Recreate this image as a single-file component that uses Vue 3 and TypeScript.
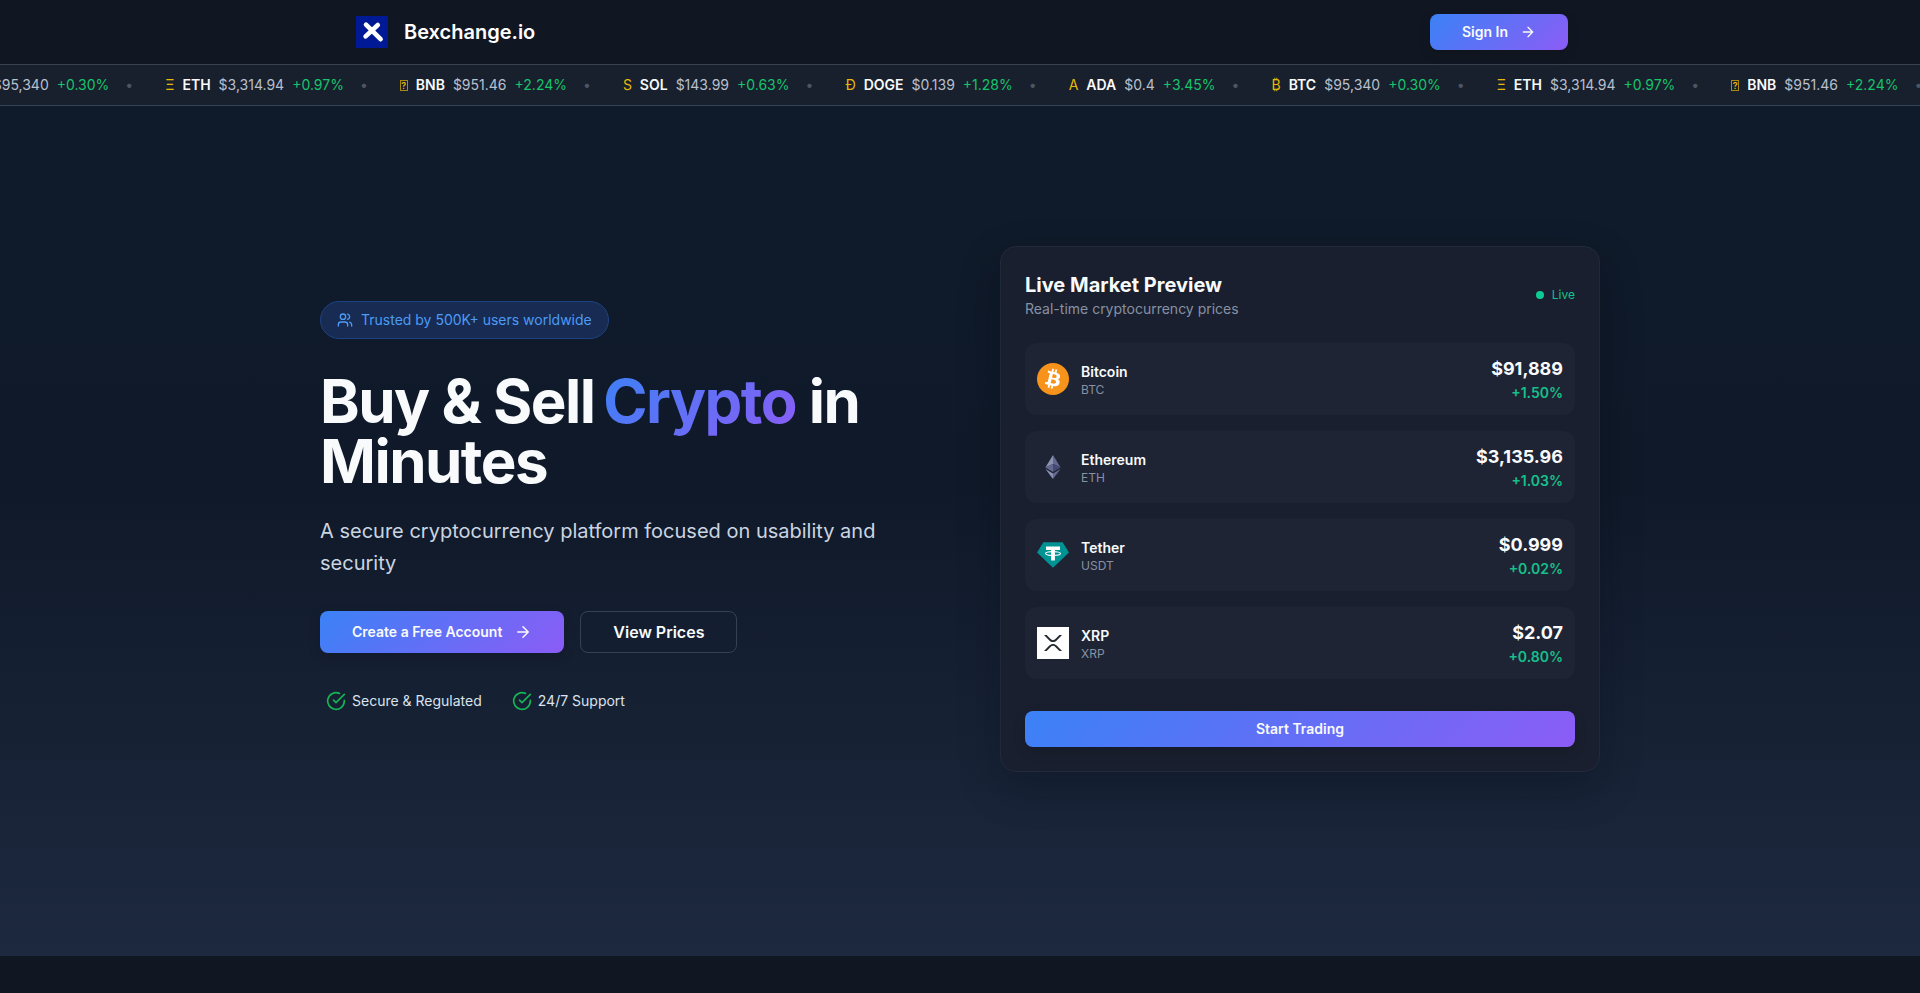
<script setup lang="ts">
interface Tick {
  icon: string
  symbol: string
  price: string
  change: string
}

interface Coin {
  id: 'btc' | 'eth' | 'usdt' | 'xrp'
  name: string
  symbol: string
  price: string
  change: string
}

const ticks: Tick[] = [
  { icon: '₿', symbol: 'BTC', price: '$95,340', change: '+0.30%' },
  { icon: 'Ξ', symbol: 'ETH', price: '$3,314.94', change: '+0.97%' },
  { icon: '', symbol: 'BNB', price: '$951.46', change: '+2.24%' },
  { icon: 'S', symbol: 'SOL', price: '$143.99', change: '+0.63%' },
  { icon: 'Ð', symbol: 'DOGE', price: '$0.139', change: '+1.28%' },
  { icon: 'A', symbol: 'ADA', price: '$0.4', change: '+3.45%' },
]

const tape: Tick[] = [...ticks, ...ticks.slice(0, 3)]

const coins: Coin[] = [
  { id: 'btc', name: 'Bitcoin', symbol: 'BTC', price: '$91,889', change: '+1.50%' },
  { id: 'eth', name: 'Ethereum', symbol: 'ETH', price: '$3,135.96', change: '+1.03%' },
  { id: 'usdt', name: 'Tether', symbol: 'USDT', price: '$0.999', change: '+0.02%' },
  { id: 'xrp', name: 'XRP', symbol: 'XRP', price: '$2.07', change: '+0.80%' },
]

const features: string[] = ['Secure & Regulated', '24/7 Support']
</script>

<template>
  <div class="page">
    <header class="header">
      <div class="header-inner">
        <a class="brand" href="#">
          <svg class="logo" viewBox="0 0 32 32" aria-hidden="true">
            <rect width="32" height="32" fill="#001a96" />
            <path d="M10 8.6 24.6 23.2M21.8 9 9.6 20.4" fill="none" stroke="#fff" stroke-width="4.6" stroke-linecap="round" />
          </svg>
          <span>Bexchange.io</span>
        </a>
        <button class="btn primary" type="button">
          Sign In
          <svg class="icon-sm line" viewBox="0 0 24 24" aria-hidden="true"><path d="M5 12h14M12 5l7 7-7 7" /></svg>
        </button>
      </div>
    </header>

    <div class="ticker">
      <ul class="tape">
        <li v-for="(t, i) in tape" :key="i" class="tick">
          <span v-if="t.icon" class="tick-icon">{{ t.icon }}</span>
          <span v-else class="tick-icon missing">?</span>
          <span class="tick-symbol">{{ t.symbol }}</span>
          <span class="tick-price">{{ t.price }}</span>
          <span class="tick-change">{{ t.change }}</span>
          <span class="tick-dot">•</span>
        </li>
      </ul>
    </div>

    <main class="hero">
      <div class="hero-inner">
        <section class="intro">
          <p class="badge">
            <svg class="icon-sm line" viewBox="0 0 24 24" aria-hidden="true">
              <path d="M16 21v-2a4 4 0 0 0-4-4H6a4 4 0 0 0-4 4v2" />
              <circle cx="9" cy="7" r="4" />
              <path d="M22 21v-2a4 4 0 0 0-3-3.87M16 3.13a4 4 0 0 1 0 7.75" />
            </svg>
            Trusted by 500K+ users worldwide
          </p>
          <h1>Buy &amp; Sell <span class="accent">Crypto</span> in Minutes</h1>
          <p class="lead">A secure cryptocurrency platform focused on usability and security</p>
          <div class="actions">
            <button class="btn primary large" type="button">
              Create a Free Account
              <svg class="icon-md line" viewBox="0 0 24 24" aria-hidden="true"><path d="M5 12h14M12 5l7 7-7 7" /></svg>
            </button>
            <button class="btn outline large" type="button">View Prices</button>
          </div>
          <ul class="features">
            <li v-for="f in features" :key="f">
              <svg class="icon-lg line" viewBox="0 0 24 24" aria-hidden="true">
                <path d="M22 11.08V12a10 10 0 1 1-5.93-9.14" />
                <path d="m9 11 3 3L22 4" />
              </svg>
              {{ f }}
            </li>
          </ul>
        </section>

        <section class="card">
          <div class="card-head">
            <div>
              <h2>Live Market Preview</h2>
              <p>Real-time cryptocurrency prices</p>
            </div>
            <span class="live">Live</span>
          </div>
          <ul class="coins">
            <li v-for="c in coins" :key="c.id" class="coin">
              <svg v-if="c.id === 'btc'" class="coin-icon" viewBox="0 0 64 64" aria-hidden="true">
                <circle cx="32" cy="32" r="32" fill="#f7931a" />
                <path fill="#fff" d="M46.1 27.44c.64-4.26-2.6-6.55-7.04-8.08l1.44-5.77-3.51-.87-1.4 5.61c-.92-.23-1.87-.45-2.81-.66l1.41-5.65-3.51-.88-1.44 5.77c-.76-.17-1.51-.35-2.24-.53l-4.84-1.22-.94 3.76s2.61.6 2.55.63c1.42.36 1.68 1.3 1.64 2.04l-3.94 15.8c-.17.44-.62 1.08-1.61.84.04.05-2.55-.64-2.55-.64l-1.75 4.03 4.57 1.14c.85.21 1.68.44 2.5.65l-1.45 5.83 3.5.88 1.44-5.77c.96.26 1.89.5 2.8.73l-1.44 5.74 3.52.88 1.45-5.82c5.99 1.13 10.49.68 12.38-4.74 1.53-4.36-.07-6.88-3.22-8.52 2.29-.53 4.02-2.04 4.49-5.15zm-8.02 11.25c-1.09 4.36-8.43 2-10.81 1.41l1.93-7.73c2.38.59 10.01 1.77 8.88 6.32zm1.09-11.31c-.99 3.97-7.1 1.95-9.08 1.46l1.75-7.01c1.98.49 8.36 1.41 7.33 5.55z" />
              </svg>
              <svg v-else-if="c.id === 'eth'" class="coin-icon" viewBox="0 0 32 32" aria-hidden="true">
                <path d="M16 4 8.4 16.4 16 13z" fill="#8a92b2" />
                <path d="M16 4v9l7.6 3.4z" fill="#62688f" />
                <path d="M8.4 16.4 16 13v7.9z" fill="#62688f" />
                <path d="M16 13v7.9l7.6-4.5z" fill="#454a75" />
                <path d="m8.4 17.9 7.6 4.5V28z" fill="#8a92b2" />
                <path d="M23.6 17.9 16 22.4V28z" fill="#62688f" />
              </svg>
              <svg v-else-if="c.id === 'usdt'" class="coin-icon" viewBox="0 0 32 32" aria-hidden="true">
                <path d="M6.4 3.2h19.2L32 13.6 16 28.8 0 13.6z" fill="#009393" />
                <path d="M9 7.6h14v3.3H9zM14.1 10.9h3.8v10.6h-3.8z" fill="#fff" />
                <ellipse cx="16" cy="14.6" rx="7.5" ry="1.9" fill="none" stroke="#fff" stroke-width="1.2" />
              </svg>
              <svg v-else class="coin-icon" viewBox="0 0 32 32" aria-hidden="true">
                <rect width="32" height="32" fill="#fff" />
                <path d="M7 8h2.6l4 4.1c1.4 1.4 3.4 1.4 4.8 0l4-4.1H25l-5.3 5.4c-2.1 2.1-5.3 2.1-7.4 0zM7 24h2.6l4-4.1c1.4-1.4 3.4-1.4 4.8 0l4 4.1H25l-5.3-5.4c-2.1-2.1-5.3-2.1-7.4 0z" fill="#23292f" />
              </svg>
              <div class="coin-name">
                <strong>{{ c.name }}</strong>
                <span>{{ c.symbol }}</span>
              </div>
              <div class="coin-price">
                <strong>{{ c.price }}</strong>
                <span>{{ c.change }}</span>
              </div>
            </li>
          </ul>
          <button class="btn primary wide" type="button">Start Trading</button>
        </section>
      </div>
    </main>
  </div>
</template>

<style>
body {
  margin: 0;
  background: #111722;
}
</style>

<style scoped>
.page {
  min-height: 100vh;
  background: #111722;
  color: #f8fafc;
  font-family: Inter, "Liberation Sans", sans-serif;
  font-size: 14px;
  line-height: 20px;
  overflow: hidden;
}
h1, h2, p, ul {
  margin: 0;
  padding: 0;
}
ul {
  list-style: none;
}
.line {
  fill: none;
  stroke: currentColor;
  stroke-width: 2;
  stroke-linecap: round;
  stroke-linejoin: round;
}
.icon-sm { width: 16px; height: 16px; }
.icon-md { width: 18px; height: 18px; }
.icon-lg { width: 20px; height: 20px; }

.header {
  background: #111722;
}
.header-inner {
  max-width: 1216px;
  margin: 0 auto;
  height: 64px;
  display: flex;
  align-items: center;
  justify-content: space-between;
}
.brand {
  display: flex;
  align-items: center;
  gap: 16px;
  padding-left: 4px;
  color: #fff;
  font-size: 20px;
  font-weight: 600;
  line-height: 28px;
  text-decoration: none;
}
.logo { width: 32px; height: 32px; }

.btn {
  display: inline-flex;
  align-items: center;
  justify-content: center;
  gap: 12px;
  height: 36px;
  padding: 0 32px;
  border: 0;
  border-radius: 8px;
  color: #f8fafc;
  font: 600 14px/20px Inter, "Liberation Sans", sans-serif;
  cursor: pointer;
}
.primary {
  background: linear-gradient(135deg, #3b82f6, #8b5cf6);
  box-shadow: 0 4px 12px rgba(0, 0, 0, 0.15);
}
.large { height: 42px; }
.outline {
  border: 1px solid #364152;
  background: transparent;
  font-size: 16px;
}
.wide { width: 100%; }

.ticker {
  border-top: 1px solid #364152;
  border-bottom: 1px solid #364152;
  background: #181f2d;
  overflow: hidden;
}
.tape {
  display: flex;
  width: max-content;
  padding: 10px 0;
  transform: translateX(-60px);
}
.tick {
  display: flex;
  align-items: center;
  gap: 8px;
  padding-right: 32px;
}
.tick-icon { color: #e8b90a; }
.missing {
  box-sizing: border-box;
  width: 8px;
  height: 11px;
  border: 1px solid #a98a10;
  font-size: 9px;
  font-weight: 600;
  line-height: 9px;
  text-align: center;
}
.tick-symbol { color: #f8fafc; font-weight: 600; }
.tick-price { color: #b8c0cd; }
.tick-change { color: #16c46c; }
.tick-dot { color: #4b5563; padding-left: 8px; }

.hero {
  padding: 140px 32px 184px;
  background: linear-gradient(180deg, #0f1b2b 0%, #0f1929 45%, #1d293f 100%);
}
.hero-inner {
  max-width: 1280px;
  margin: 0 auto;
  display: grid;
  grid-template-columns: 1fr 1fr;
  gap: 80px;
  align-items: center;
}
.intro {
  display: flex;
  flex-direction: column;
  align-items: flex-start;
}
.badge {
  display: flex;
  align-items: center;
  gap: 8px;
  padding: 8px 16px;
  border: 1px solid #1f4382;
  border-radius: 20px;
  background: #172b53;
  color: #4d9bf5;
}
h1 {
  margin-top: 32px;
  font-size: 60px;
  line-height: 60px;
  font-weight: 700;
  letter-spacing: -0.025em;
}
.accent {
  margin-left: -4px;
  background: linear-gradient(135deg, #3b82f6, #8b5cf6);
  background-clip: text;
  -webkit-background-clip: text;
  color: transparent;
}
.lead {
  margin-top: 24px;
  color: #cbd5e1;
  font-size: 20px;
  line-height: 32px;
}
.actions {
  display: flex;
  gap: 16px;
  margin-top: 32px;
}
.features {
  display: flex;
  gap: 30px;
  margin-top: 32px;
  padding: 6px;
}
.features li {
  display: flex;
  align-items: center;
  gap: 6px;
  color: #dbe3ee;
}
.features svg { color: #16b455; }

.card {
  padding: 24px;
  border: 1px solid #202a39;
  border-radius: 16px;
  background: #191f2e;
  box-shadow: 0 16px 40px rgba(5, 12, 20, 0.28);
}
.card-head {
  display: flex;
  align-items: center;
  justify-content: space-between;
}
h2 {
  font-size: 20px;
  line-height: 28px;
  font-weight: 700;
}
.card-head p { color: #8791a3; }
.live {
  display: flex;
  align-items: center;
  gap: 8px;
  color: #10c490;
  font-size: 12px;
  line-height: 16px;
}
.live::before {
  content: "";
  width: 8px;
  height: 8px;
  border-radius: 50%;
  background: #0ccb93;
}
.coins {
  display: grid;
  gap: 16px;
  margin: 24px 0 32px;
}
.coin {
  display: flex;
  align-items: center;
  gap: 12px;
  padding: 12px;
  border-radius: 12px;
  background: #1e2433;
}
.coin-icon { width: 32px; height: 32px; }
.coin-name,
.coin-price {
  display: flex;
  flex-direction: column;
}
.coin-name { padding-top: 2px; }
.coin-name strong { font-weight: 600; }
.coin-name span {
  color: #8791a3;
  font-size: 12px;
  line-height: 16px;
}
.coin-price {
  margin-left: auto;
  text-align: right;
}
.coin-price strong {
  font-size: 18px;
  line-height: 28px;
  font-weight: 700;
}
.coin-price span {
  color: #16c08d;
  font-weight: 600;
}

@media (max-width: 1000px) {
  .hero { padding: 64px 24px; }
  .hero-inner { grid-template-columns: 1fr; }
  .header-inner { padding: 0 24px; }
}
</style>
